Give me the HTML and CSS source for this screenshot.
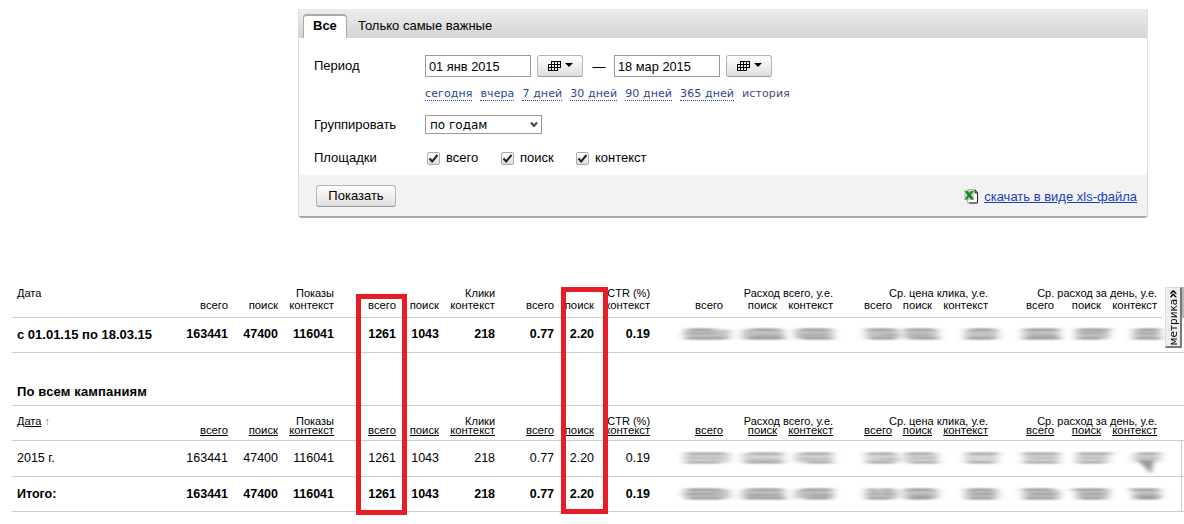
FILE: index.html
```
<!DOCTYPE html>
<html lang="ru">
<head>
    <meta charset="UTF-8">
    <title>Статистика</title>
    <link rel="stylesheet" href="styles.css">
</head>
<body>
    <form class="filter">
        <div class="tabs">
            <span class="tab active">Все</span>
            <span class="tab">Только самые важные</span>
        </div>

        <div class="fields">
            <div class="row period">
                <label class="name">Период</label>
                <span class="date">01 янв 2015</span>
                <button type="button" class="btn calendar">
                    <svg width="26" height="12" viewBox="0 0 26 12"><path d="M3.5 1v10M6.5 1v10M9.5 1v10M12.5 1v7M3 1.5h10M0 4.5h13M0 7.5h13M0 10.5h10M.5 4v7" stroke="#000" fill="none"/><path d="M17 3h8l-4 4z"/></svg>
                </button>
                <span class="dash">—</span>
                <span class="date">18 мар 2015</span>
                <button type="button" class="btn calendar">
                    <svg width="26" height="12" viewBox="0 0 26 12"><path d="M3.5 1v10M6.5 1v10M9.5 1v10M12.5 1v7M3 1.5h10M0 4.5h13M0 7.5h13M0 10.5h10M.5 4v7" stroke="#000" fill="none"/><path d="M17 3h8l-4 4z"/></svg>
                </button>
            </div>
            <div class="quick">
                <a>сегодня</a><a>вчера</a><a>7 дней</a><a>30 дней</a><a>90 дней</a><a>365 дней</a><span>история</span>
            </div>
            <div class="row group">
                <label class="name">Группировать</label>
                <span class="select">по годам
                    <svg width="8" height="7" viewBox="0 0 8 7"><path d="M1 1.5l3 3.5 3-3.5" stroke="#444" stroke-width="2" fill="none"/></svg>
                </span>
            </div>
            <div class="row places">
                <label class="name">Площадки</label>
                <label class="check first"><span class="box"><svg width="11" height="11" viewBox="0 0 11 11"><path d="M1.5 5.5l2.7 3L9.5 2" stroke="#222" stroke-width="2" fill="none"/></svg></span>всего</label>
                <label class="check second"><span class="box"><svg width="11" height="11" viewBox="0 0 11 11"><path d="M1.5 5.5l2.7 3L9.5 2" stroke="#222" stroke-width="2" fill="none"/></svg></span>поиск</label>
                <label class="check"><span class="box"><svg width="11" height="11" viewBox="0 0 11 11"><path d="M1.5 5.5l2.7 3L9.5 2" stroke="#222" stroke-width="2" fill="none"/></svg></span>контекст</label>
            </div>
        </div>

        <div class="bottom">
            <button type="button" class="btn submit">Показать</button>
            <a class="xls">
                <svg width="15" height="15" viewBox="0 0 15 15"><path d="M3.5 .5h8l2 2.5v11h-10z" fill="#fff" stroke="#b5b5b5"/><path d="M11 1l2.5 3v10H5M11 1v3h3" stroke="#222" fill="none"/><path d="M0 1h10v10H0z" fill="#b9dcb9"/><path d="M1 2h3l1.5 2L7 2h3L7 6l3 4.5H7L5 8l-1.5 2.5h-3L3.5 6z" fill="#2e8a35"/><path d="M2 3l6 7" stroke="#17511f"/></svg>
                <span>скачать в виде xls-файла</span>
            </a>
        </div>
    </form>

    <!-- shared bits for hidden money values -->
    <svg class="defs" width="0" height="0">
        <defs>
            <filter id="soft" x="-30%" y="-30%" width="160%" height="160%"><feGaussianBlur stdDeviation="2.5 1"/></filter>
            <filter id="streak" x="-30" y="-10" width="600" height="40" filterUnits="userSpaceOnUse"><feGaussianBlur stdDeviation="4.5 0.8"/></filter>
            <g id="hidden">
                <path filter="url(#streak)" stroke="#c2c2c2" stroke-width="9" d="M35 10h45M92 10h42M145 10h38M216 10h32M254 10h34M315 10h33M373 10h36M426 10h33M483 10h27"/>
            </g>
        </defs>
    </svg>

    <table class="stat summary">
        <colgroup>
            <col class="c-date"><col class="c56"><col class="c50"><col class="c56"><col class="c62"><col class="c43"><col class="c56"><col class="c59"><col class="c40"><col class="c56"><col class="c73"><col class="c54"><col class="c56"><col class="c59"><col class="c40"><col class="c56"><col class="c66"><col class="c47"><col class="c56"><col>
        </colgroup>
        <thead>
            <tr class="top"><th class="left">Дата</th><th colspan="3">Показы</th><th colspan="3">Клики</th><th colspan="3">CTR (%)</th><th colspan="3">Расход всего, у.е.</th><th colspan="3">Ср. цена клика, у.е.</th><th colspan="3">Ср. расход за день, у.е.</th><th></th></tr>
            <tr class="sub"><th></th><th>всего</th><th>поиск</th><th>контекст</th><th>всего</th><th>поиск</th><th>контекст</th><th>всего</th><th>поиск</th><th>контекст</th><th>всего</th><th>поиск</th><th>контекст</th><th>всего</th><th>поиск</th><th>контекст</th><th>всего</th><th>поиск</th><th>контекст</th><th></th></tr>
        </thead>
        <tbody>
            <tr class="bold">
                <td class="left">с 01.01.15 по 18.03.15</td><td>163441</td><td>47400</td><td>116041</td><td>1261</td><td>1043</td><td>218</td><td>0.77</td><td>2.20</td><td>0.19</td>
                <td colspan="10" class="money">
                    <svg width="534" height="20" viewBox="0 0 534 20"><use href="#hidden"/><g filter="url(#streak)" fill="none" stroke="#444"><path d="M38 5.5h26M101 5.5h28M150 5.5h30M217 5.5h28M256 5.5h28M320 5.5h24M375 5.5h34M428 5.5h32M487 5.5h23M36 14.5h40M96 14.5h38M152 14.5h30M220 14.5h26M260 14.5h28M317 14.5h28M374 14.5h36M428 14.5h24M485 14.5h26"/><path stroke="#888" d="M34 9.5h30M102 12h30M150 11h30M230 11h20M260 11h20M380 12h28M430 9h25M488 9.5h20"/></g></svg>
                </td>
            </tr>
        </tbody>
    </table>

    <h2 class="title">По всем кампаниям</h2>

    <table class="stat detail">
        <colgroup>
            <col class="c-date"><col class="c56"><col class="c50"><col class="c56"><col class="c62"><col class="c43"><col class="c56"><col class="c59"><col class="c40"><col class="c56"><col class="c73"><col class="c54"><col class="c56"><col class="c59"><col class="c40"><col class="c56"><col class="c66"><col class="c47"><col class="c56"><col>
        </colgroup>
        <thead>
            <tr class="top"><th class="left"><a>Дата</a> <span class="arrow">↑</span></th><th colspan="3">Показы</th><th colspan="3">Клики</th><th colspan="3">CTR (%)</th><th colspan="3">Расход всего, у.е.</th><th colspan="3">Ср. цена клика, у.е.</th><th colspan="3">Ср. расход за день, у.е.</th><th></th></tr>
            <tr class="sub"><th></th><th><a>всего</a></th><th><a>поиск</a></th><th><a>контекст</a></th><th><a>всего</a></th><th><a>поиск</a></th><th><a>контекст</a></th><th><a>всего</a></th><th><a>поиск</a></th><th><a>контекст</a></th><th><a>всего</a></th><th><a>поиск</a></th><th><a>контекст</a></th><th><a>всего</a></th><th><a>поиск</a></th><th><a>контекст</a></th><th><a>всего</a></th><th><a>поиск</a></th><th><a>контекст</a></th><th></th></tr>
        </thead>
        <tbody>
            <tr class="year">
                <td class="left">2015 г.</td><td>163441</td><td>47400</td><td>116041</td><td>1261</td><td>1043</td><td>218</td><td>0.77</td><td>2.20</td><td>0.19</td>
                <td colspan="10" class="money">
                    <svg width="534" height="20" viewBox="0 0 534 20"><use href="#hidden" opacity=".7"/><g filter="url(#streak)" fill="none" stroke="#555"><path d="M36 5.5h40M98 5.5h34M150 5.5h32M217 5.5h28M256 5.5h28M318 5.5h30M373 5.5h36M428 5.5h34M487 5.5h23M36 14.5h34M96 14.5h36M156 14.5h26M218 14.5h26M260 14.5h28M318 14.5h26M374 14.5h34M428 14.5h26"/><path stroke="#999" d="M34 10h40M98 12h30M150 11h30M230 11h20M260 10h26M380 10h28M430 10h25M488 10h20"/></g><path filter="url(#soft)" fill="#999" d="M488 12h16l-3 14z"/></svg>
                </td>
            </tr>
            <tr class="bold">
                <td class="left">Итого:</td><td>163441</td><td>47400</td><td>116041</td><td>1261</td><td>1043</td><td>218</td><td>0.77</td><td>2.20</td><td>0.19</td>
                <td colspan="10" class="money">
                    <svg width="534" height="20" viewBox="0 0 534 20"><use href="#hidden"/><g filter="url(#streak)" fill="none" stroke="#444"><path d="M37 5.5h34M98 5.5h34M152 5.5h30M218 5.5h8M232 5.5h10M256 5.5h28M318 5.5h26M373 5.5h30M422 5.5h34M480 5.5h28M38 14.5h34M96 14.5h40M156 14.5h24M217 14.5h24M258 14.5h24M318 14.5h26M375 14.5h32M430 14.5h24M486 14.5h22"/><path stroke="#777" d="M34 10h34M98 11h34M158 11h24M218 10h8M233 10h10M262 12h20M320 10h24M380 10h28M430 10h25M486 12h24"/></g></svg>
                </td>
            </tr>
        </tbody>
    </table>

    <div class="metrika"><span>метрика<b>»</b></span></div>
    <div class="scroll"></div>
    <div class="mark clicks"></div>
    <div class="mark ctr"></div>
</body>
</html>
```
FILE: styles.css
```
body {
    margin: 0;
    height: 524px;
    overflow: hidden;
    position: relative;
    background: #fff;
    color: #000;
    font: 13px "Liberation Sans", Arial, sans-serif;
}

/* filter form */
.filter {
    width: 850px;
    height: 209px;
    margin: 9px 0 0 298px;
    box-sizing: border-box;
    border: 1px solid #ddd;
    border-top: none;
    border-bottom: 2px solid #aaa;
    border-radius: 0 0 4px 4px;
    overflow: hidden;
}

.tabs {
    display: flex;
    align-items: flex-end;
    height: 29px;
    padding-left: 4px;
    background: linear-gradient(#ededed, #d4d4d4);
}

.tab {
    height: 24px;
    line-height: 23px;
    padding: 0 11px;
    box-sizing: border-box;
}

.tab.active {
    width: 44px;
    padding: 0 9px;
    border: 1px solid #aaa;
    border-top-width: 2px;
    border-bottom: none;
    border-radius: 4px 4px 0 0;
    background: #fff;
    font-weight: bold;
    line-height: 20px;
}

.fields {
    height: 137px;
    padding-left: 15px;
    box-sizing: border-box;
}

.row {
    display: flex;
    align-items: center;
}

.name {
    width: 111px;
}

.period {
    padding-top: 17px;
    height: 22px;
}

.period .name {
    padding-bottom: 2px;
}

.date {
    width: 106px;
    height: 22px;
    padding-left: 3px;
    box-sizing: border-box;
    border: 1px solid #999;
    font-size: 12.8px;
    line-height: 21px;
}

.btn {
    box-sizing: border-box;
    border: 1px solid #b5b5b5;
    border-bottom-color: #999;
    border-radius: 3px;
    background: linear-gradient(#fff, #dedede);
    font: inherit;
}

.calendar {
    width: 46px;
    height: 22px;
    margin-left: 6px;
    padding: 0 0 0 1px;
    line-height: 0;
}

.dash {
    width: 31px;
    padding-left: 1px;
    box-sizing: border-box;
    text-align: center;
}

.quick {
    display: flex;
    gap: 8px;
    height: 14px;
    padding: 10px 0 0 111px;
    color: #2f4694;
    font: 11px/13px "DejaVu Sans", Verdana, sans-serif;
    letter-spacing: 0.1px;
}

.quick a {
    border-bottom: 1px dotted #2f4694;
}

.quick span {
    color: #4a4a78;
}

.group {
    padding-top: 14px;
    height: 19px;
}

.select {
    display: flex;
    align-items: center;
    justify-content: space-between;
    width: 117px;
    height: 19px;
    padding: 0 3px 0 4px;
    box-sizing: border-box;
    border: 1px solid #999;
    font: 12px "DejaVu Sans", Verdana, sans-serif;
}

.places {
    padding-top: 15px;
    height: 17px;
}

.check {
    display: flex;
    align-items: center;
}

.check.first {
    width: 74px;
}

.check.second {
    width: 75px;
}

.box {
    width: 13px;
    height: 13px;
    margin: 1px 6px 0 2px;
    box-sizing: border-box;
    border: 1px solid #aaa;
    border-radius: 2px;
    background: linear-gradient(#fff, #ddd);
    line-height: 0;
}

.bottom {
    display: flex;
    align-items: center;
    justify-content: space-between;
    height: 41px;
    padding: 0 10px 0 17px;
    background: #f2f2f2;
}

.submit {
    width: 80px;
    height: 22px;
    padding: 0;
}

.xls {
    display: flex;
    align-items: center;
    gap: 5px;
    padding-top: 2px;
    color: #1a3dc1;
}

.xls span {
    text-decoration: underline;
}

.defs {
    display: block;
}

/* tables */
.stat {
    width: 1172px;
    margin-left: 12px;
    table-layout: fixed;
    border-collapse: separate;
    border-spacing: 0;
}

.c-date { width: 160px; }
.c40 { width: 40px; }
.c43 { width: 43px; }
.c47 { width: 47px; }
.c50 { width: 50px; }
.c54 { width: 54px; }
.c56 { width: 56px; }
.c59 { width: 59px; }
.c62 { width: 62px; }
.c66 { width: 66px; }
.c73 { width: 73px; }

.stat th,
.stat td {
    padding: 0;
    text-align: right;
    white-space: nowrap;
}

.stat th {
    font-size: 11px;
    font-weight: normal;
    line-height: 12px;
}

.stat .sub th {
    font-size: 11.3px;
    border-bottom: 1px solid #ccc;
}

.stat .left {
    padding-left: 5px;
    text-align: left;
}

.stat td {
    height: 32px;
    padding-bottom: 2px;
    border-bottom: 1px solid #ccc;
    font-size: 12.5px;
}

.stat .bold td {
    font-weight: bold;
}

.summary td.left {
    font-size: 13px;
}

.stat a {
    text-decoration: underline;
}

.stat .money {
    text-align: left;
    line-height: 0;
}

.money svg {
    display: block;
    overflow: visible;
}

.summary {
    margin-top: 68px;
}

.summary .top th {
    height: 13px;
    vertical-align: bottom;
}

.summary .sub th {
    height: 18px;
    vertical-align: top;
}

/* header line stops before the side tab */
.summary .sub th:last-child {
    border-bottom-color: transparent;
    background: linear-gradient(#ccc, #ccc) 0 100% / 5px 1px no-repeat border-box;
}

.title {
    height: 52px;
    margin: 0 0 0 17px;
    font-size: 13px;
    line-height: 77px;
    letter-spacing: 0.15px;
}

.detail {
    border-top: 1px solid #ccc;
}

.detail .top th {
    height: 21px;
    line-height: 11px;
    vertical-align: bottom;
}

.detail .sub th {
    height: 13px;
    line-height: 7px;
    vertical-align: top;
}

.detail td {
    height: 33px;
    padding-bottom: 1px;
}

.detail .year td {
    height: 33px;
    padding-bottom: 2px;
}

.detail td:last-child {
    background: linear-gradient(#ccc, #ccc) 531px 0 / 1px 100% no-repeat;
}

.arrow {
    color: #777;
}

/* side tab */
.metrika {
    position: absolute;
    left: 1165px;
    top: 287px;
    width: 17px;
    height: 61px;
    box-sizing: border-box;
    border: 1px solid #ddd;
    border-right: 2px solid #777;
    border-bottom: 2px solid #777;
    background: #eee;
    display: flex;
    align-items: center;
    justify-content: center;
}

.metrika span {
    writing-mode: vertical-rl;
    transform: rotate(180deg);
    font: 10.5px/14px "DejaVu Sans", Verdana, sans-serif;
    white-space: nowrap;
}

.metrika b {
    font-size: 15px;
}

.scroll {
    position: absolute;
    left: 1182px;
    top: 287px;
    width: 2px;
    height: 31px;
    background: #b8b8c0;
}

/* highlighted columns */
.mark {
    position: absolute;
    box-sizing: border-box;
    border: 5px solid #e81c27;
}

.clicks {
    left: 356px;
    top: 294px;
    width: 51px;
    height: 221px;
}

.ctr {
    left: 561px;
    top: 287px;
    width: 47px;
    height: 227px;
}
```
